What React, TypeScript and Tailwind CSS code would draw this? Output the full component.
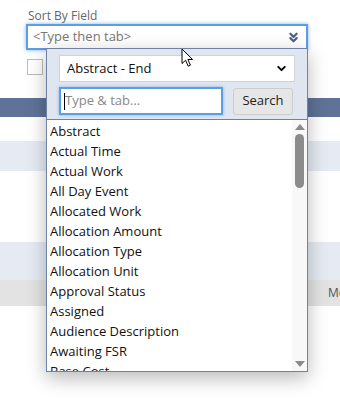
import React from "react";
import { ChevronDown, ChevronsDown } from "lucide-react";

// Field picker popup over a sort form
const fields = [
  "Abstract",
  "Actual Time",
  "Actual Work",
  "All Day Event",
  "Allocated Work",
  "Allocation Amount",
  "Allocation Type",
  "Allocation Unit",
  "Approval Status",
  "Assigned",
  "Audience Description",
  "Awaiting FSR",
  "Base Cost",
];

const Cursor = () => (
  <svg
    className="absolute left-[181px] top-[48px]"
    width="14"
    height="20"
    viewBox="0 0 14 20"
  >
    <path
      d="M1 1 L1 15.5 L4.6 12.3 L7.2 18.2 L9.4 17.2 L6.9 11.5 L11.6 11.5 Z"
      fill="#fff"
      stroke="#000"
      strokeWidth="1"
      strokeLinejoin="round"
    />
  </svg>
);

const FieldDropdown: React.FC = () => {
  return (
    <div className="absolute left-[46px] top-[48px] w-[262px] h-[324px] flex flex-col border border-[#6f82a3] bg-white shadow-[0_6px_18px_rgba(0,0,0,0.28)]">
      {/* Header with select + search */}
      <div className="bg-[#dfe6f0] pl-[12px] pt-[6px] pb-[4px] border-b border-[#6f82a3]">
        <div className="w-[236px] h-[27px] bg-white border border-[#cfd3d8] flex items-center justify-between pl-[7px] pr-[6px]">
          <span className="text-[13px] text-[#111]">Abstract - End</span>
          <ChevronDown className="w-[13px] h-[13px] text-black" strokeWidth={3.5} />
        </div>
        <div className="flex items-center gap-[10px] mt-[5px]">
          <div className="w-[164px] h-[28px] bg-white border-2 border-[#5d9de3] shadow-[0_0_3px_#7fb2ea] flex items-center pl-[3px]">
            <span className="w-px h-[17px] bg-black" />
            <span className="text-[13px] text-[#888]">Type &amp; tab...</span>
          </div>
          <button className="w-[60px] h-[27px] bg-[#e6e6e6] border border-[#cdcdcd] rounded-[3px] text-[13px] text-[#222]">
            Search
          </button>
        </div>
      </div>

      {/* Field list with scrollbar */}
      <div className="flex flex-1 overflow-hidden">
        <div className="flex-1 pl-[3px] pt-[1px] overflow-hidden">
          {fields.map((f) => (
            <div key={f} className="h-[20px] leading-[20px] text-[13px] text-[#111] whitespace-nowrap">
              {f}
            </div>
          ))}
        </div>
        <div className="w-[15px] bg-[#f8f8f8] flex flex-col items-center pt-[4px] pb-[4px]">
          <div className="w-0 h-0 border-l-[5px] border-r-[5px] border-b-[6px] border-l-transparent border-r-transparent border-b-[#8a8a8a]" />
          <div className="w-[9px] h-[54px] mt-[4px] rounded-full bg-[#8c8c8c]" />
          <div className="flex-1" />
          <div className="w-0 h-0 border-l-[5px] border-r-[5px] border-t-[6px] border-l-transparent border-r-transparent border-t-[#8a8a8a]" />
        </div>
      </div>
    </div>
  );
};

export default function App() {
  return (
    <div className="relative w-[340px] h-[414px] overflow-hidden bg-white font-['Open_Sans',sans-serif]">
      <div className="pl-[26px] pr-[32px] pt-[7px]">
        <div className="pl-[2px] text-[12px] leading-[17px] text-[#666]">Sort By Field</div>
        <div className="h-[26px] border-2 border-[#5d9de3] shadow-[0_0_4px_#7fb2ea] flex items-center justify-between pl-[5px] pr-[5px]">
          <span className="text-[13px] text-[#777]">&lt;Type then tab&gt;</span>
          <ChevronsDown className="w-[15px] h-[15px] text-[#4d6285]" strokeWidth={3.5} />
        </div>
        <div className="ml-px mt-[9px] w-[16px] h-[16px] border border-[#bdbdbd] bg-white" />
      </div>

      {/* Grid rows behind the popup */}
      <div className="mt-[23px]">
        <div className="h-[19px] bg-[#5f7398]" />
        <div className="h-[24px] bg-white" />
        <div className="h-[30px] bg-[#e6ebf3]" />
        <div className="h-[71px] bg-white" />
        <div className="h-[38px] bg-[#e6ebf3]" />
        <div className="h-[26px] bg-[#e3e3e3] flex items-center pl-[328px] overflow-hidden">
          <span className="text-[12px] text-[#555]">Me</span>
        </div>
      </div>

      <FieldDropdown />
      <Cursor />
    </div>
  );
}
